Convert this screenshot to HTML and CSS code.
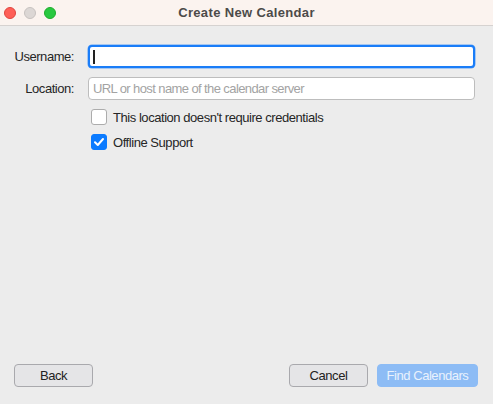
FILE: index.html
```html
<!DOCTYPE html>
<html>
<head>
<meta charset="utf-8">
<link rel="stylesheet" href="styles.css">
</head>
<body>
<div class="window">
  <div class="titlebar">
    <div class="lights">
      <span class="light red"></span>
      <span class="light grey"></span>
      <span class="light green"></span>
    </div>
    <div class="title">Create New Calendar</div>
  </div>
  <div class="content">
    <div class="form">
      <label class="label">Username:</label>
      <div class="input focused"><span class="caret"></span></div>
      <label class="label">Location:</label>
      <div class="input"><span class="placeholder">URL or host name of the calendar server</span></div>
      <div></div>
      <div class="check-row"><span class="checkbox"></span><span>This location doesn't require credentials</span></div>
      <div></div>
      <div class="check-row"><span class="checkbox checked"><svg viewBox="0 0 16 16" width="16" height="16"><path d="M4 8.3 L6.8 11 L12 5" fill="none" stroke="#fff" stroke-width="2" stroke-linecap="round" stroke-linejoin="round"/></svg></span><span>Offline Support</span></div>
    </div>
    <div class="footer">
      <button class="btn">Back</button>
      <div class="right">
        <button class="btn">Cancel</button>
        <button class="btn primary">Find Calendars</button>
      </div>
    </div>
  </div>
</div>
</body>
</html>
```

FILE: styles.css
```css
* { box-sizing: border-box; }
html, body { margin: 0; padding: 0; }
body {
  width: 493px;
  height: 404px;
  overflow: hidden;
  font-family: "Liberation Sans", Arial, sans-serif;
  font-size: 13px;
  letter-spacing: -0.45px;
  color: #262626;
  background: #ececec;
}
.window { display: flex; flex-direction: column; height: 404px; }
.titlebar {
  height: 26px;
  background: #fbf3ef;
  border-bottom: 1px solid #d6d2d0;
  display: flex;
  align-items: center;
  position: relative;
}
.lights { display: flex; gap: 8px; padding-left: 4px; }
.light { width: 12px; height: 12px; border-radius: 50%; display: block; }
.red { background: #fe5f57; border: 0.5px solid #e0443e; }
.grey { background: #dcd7d5; border: 0.5px solid #c7c2c0; }
.green { background: #28c840; border: 0.5px solid #1dad2b; }
.title {
  position: absolute;
  left: 0; right: 0; top: 0;
  line-height: 25px;
  text-align: center;
  font-weight: bold;
  letter-spacing: 0.35px;
  color: #4c4a49;
  font-size: 13px;
}
.content { flex: 1; display: flex; flex-direction: column; justify-content: space-between; padding: 19px 0 17px 0; }
.form {
  display: grid;
  grid-template-columns: 74px 1fr;
  column-gap: 14px;
  row-gap: 9px;
  align-items: center;
  padding-right: 18px;
}
.label { text-align: right; color: #262626; }
.input {
  height: 23px;
  background: #fff;
  border: 1px solid #bdbdbd;
  border-radius: 4px;
  display: flex;
  align-items: center;
  padding-left: 4px;
}
.input.focused {
  border: 2px solid #1a7df8;
  box-shadow: 0 0 0 0.5px #5ea2f7;
  padding-left: 3px;
}
.caret { width: 1.5px; height: 14px; background: #222; }
.placeholder { color: #a3a3a3; letter-spacing: -0.6px; }
.check-row { display: flex; align-items: center; gap: 6px; padding-left: 3px; height: 16px; }
.checkbox {
  width: 16px; height: 16px;
  border: 1px solid #acacac;
  border-radius: 3px;
  background: #fff;
  display: block;
}
.checkbox.checked { background: #0b7bff; border-color: #0b7bff; }
.checkbox svg { display: block; margin: -1px; }
.footer { display: flex; justify-content: space-between; align-items: center; padding: 0 15px 0 14px; }
.right { display: flex; gap: 9px; }
.btn {
  font-family: inherit;
  font-size: 13px;
  letter-spacing: -0.45px;
  height: 23px;
  width: 79px;
  background: #e5e5e7;
  border: 1px solid #a9a9ad;
  border-radius: 4px;
  color: #222;
  padding: 0;
}
.btn.primary {
  width: 101px;
  background: #8dbcf5;
  border-color: #8dbcf5;
  color: #e9f2fd;
}
```
